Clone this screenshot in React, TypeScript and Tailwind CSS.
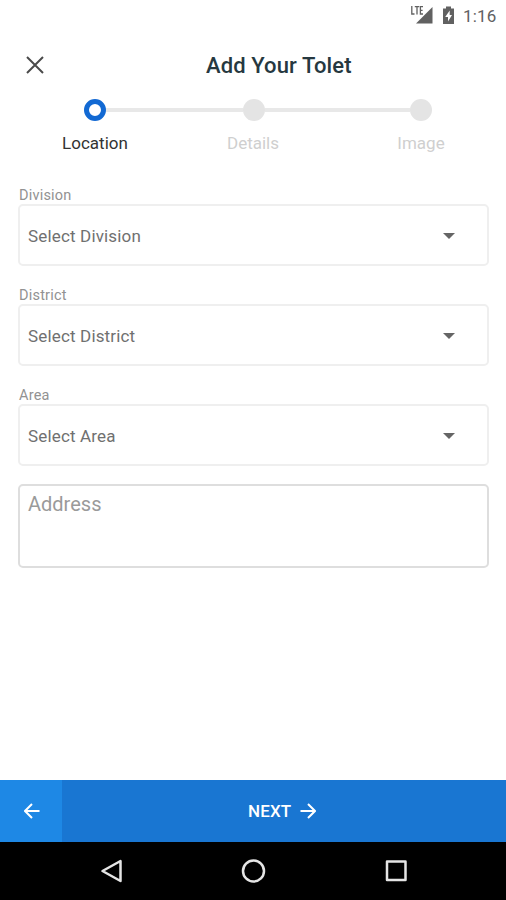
import React from "react";

function StatusBar() {
  return (
    <div className="flex h-8 shrink-0 items-center text-[#616161]">
      <svg className="ml-[408px] h-6 w-12" viewBox="408 4 48 24" fill="currentColor">
        <path d="M432.5 7V23.5H416Z" />
        <path
          d="M411.8 6V14H414.5M414.8 6.700H419.2M417 6.700V14.600M423 6.700H420.4V14H423M420.4 10.300H422.6"
          fill="none"
          stroke="#fff"
          strokeWidth="3"
        />
        <path
          d="M411.8 6V14H414.5M414.8 6.700H419.2M417 6.700V14.600M423 6.700H420.4V14H423M420.4 10.300H422.6"
          fill="none"
          stroke="currentColor"
          strokeWidth="1.3"
        />
        <path
          fillRule="evenodd"
          d="M446 6.5h5v2h3v15.5h-11V8.500h3ZM449.700 10.500L445.200 17H448V21.500L452 15H449.700Z"
        />
      </svg>
      <span className="ml-[7px] whitespace-nowrap text-[17px] leading-6 tracking-[0.2px]">1:16</span>
    </div>
  );
}

function Stepper() {
  return (
    <div className="h-[85px] shrink-0">
      <div className="flex h-[22px] items-center pl-[84px]">
        <span className="size-[22px] rounded-full border-[5px] border-[#1269d3]" />
        <span className="h-1 w-[137px] bg-[#e8e8e8]" />
        <span className="size-[22px] rounded-full bg-[#e4e4e4]" />
        <span className="h-1 w-[145px] bg-[#e8e8e8]" />
        <span className="size-[22px] rounded-full bg-[#e4e4e4]" />
      </div>
      <div className="mt-[10px] flex pl-[55px] text-center text-[17px] leading-6 text-[#cfcfcf]">
        <span className="w-20 text-[#333]">Location</span>
        <span className="ml-[78px] w-20">Details</span>
        <span className="ml-[88px] w-20">Image</span>
      </div>
    </div>
  );
}

function SelectField({ label }: { label: string }) {
  return (
    <div className="mb-[18px] h-[82px]">
      <div className="h-5 pt-0.5 pl-px text-[14.500px] leading-5 tracking-[0.2px] text-[#929292]">{label}</div>
      <div className="flex h-[62px] items-center justify-between rounded-[5px] border-2 border-[#efefef] pr-8 pl-2">
        <span className="pt-px text-[17px] leading-6 tracking-[0.16px] text-[#707070]">Select {label}</span>
        <svg className="mt-px h-1.5 w-3" viewBox="0 0 12 6" fill="#656565">
          <path d="M0 0h12L6 6Z" />
        </svg>
      </div>
    </div>
  );
}

export default function App() {
  return (
    <div className="flex h-[900px] w-[506px] flex-col overflow-hidden bg-white font-['Roboto',sans-serif]">
      <StatusBar />
      <header className="flex h-[67px] shrink-0 items-center pl-[26px]">
        <svg className="mb-0.5 size-[18px]" viewBox="0 0 18 18" fill="none" stroke="#4a4a4a" strokeWidth="2">
          <path d="M1 1L17 17M17 1L1 17" />
        </svg>
        <h1 className="ml-[162px] whitespace-nowrap text-[22px] font-medium tracking-[0.1px] text-[#263840]">
          Add Your Tolet
        </h1>
      </header>
      <Stepper />
      <main className="flex grow flex-col pr-[17px] pl-[18px]">
        <SelectField label="Division" />
        <SelectField label="District" />
        <SelectField label="Area" />
        <div className="h-[84px] rounded-[5px] border-2 border-[#dedede] pt-1.5 pl-2 text-[20px] leading-6 text-[#9a9a9a]">
          Address
        </div>
      </main>
      <footer className="flex h-[62px] shrink-0 bg-[#1976d2] text-white">
        <div className="flex w-[62px] items-center bg-[#1e88e5] pl-6">
          <svg className="size-4" viewBox="0 0 16 16" fill="none" stroke="white" strokeWidth="2">
            <path d="M15.500 8H1.500M8 1L1 8L8 15" />
          </svg>
        </div>
        <div className="flex grow items-center pl-[186px]">
          <span className="pt-0.5 text-[17px] font-medium tracking-[0.15px]">NEXT</span>
          <svg className="ml-[9px] size-4" viewBox="0 0 16 16" fill="none" stroke="white" strokeWidth="2">
            <path d="M.5 8H14.500M8 1L15 8L8 15" />
          </svg>
        </div>
      </footer>
      <nav className="flex h-[58px] shrink-0 items-center bg-black pl-[100px]">
        <svg className="h-6 w-[310px]" viewBox="100 859 310 24" fill="none" stroke="#e5e5e5" strokeWidth="2.500" strokeLinejoin="round">
          <path d="M120.500 861V881L102.500 871Z" />
          <circle cx="253.500" cy="871" r="10.500" />
          <rect x="387" y="861.500" width="18.500" height="18.500" />
        </svg>
      </nav>
    </div>
  );
}
